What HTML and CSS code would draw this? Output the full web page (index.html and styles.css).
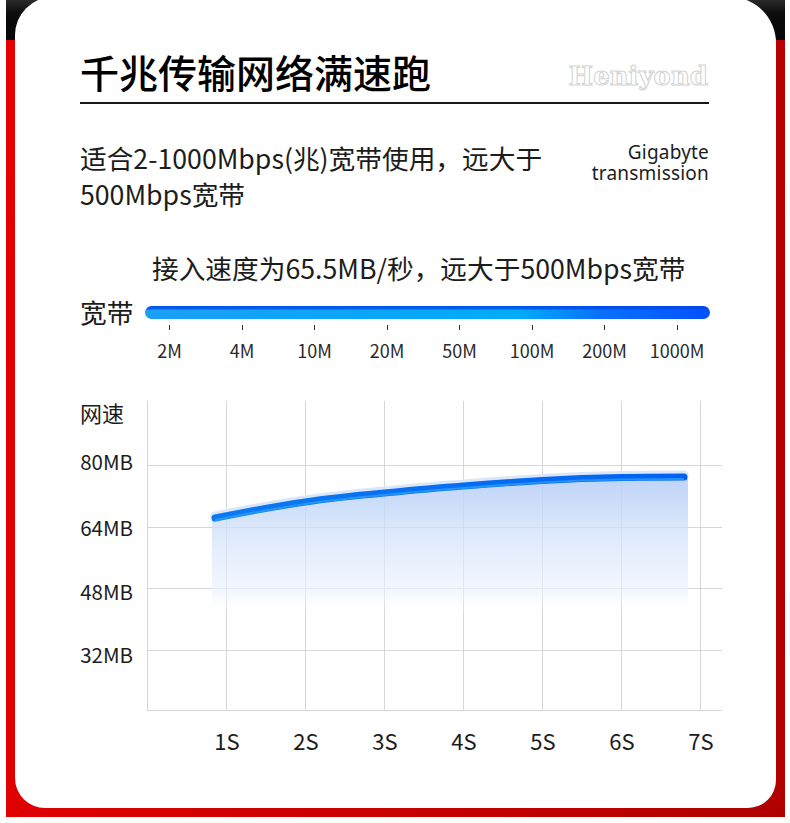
FILE: index.html
```html
<!DOCTYPE html>
<html lang="zh-CN">
<head>
<meta charset="utf-8">
<title>千兆传输网络满速跑</title>
<link rel="stylesheet" href="styles.css">
</head>
<body>
<div class="frame">
  <main class="card">
    <header class="head">
      <h1 class="title">千兆传输网络满速跑</h1>
      <span class="brand">Heniyond</span>
    </header>

    <section class="intro">
      <p class="desc">适合2-1000Mbps(兆)宽带使用，远大于<br>500Mbps宽带</p>
      <div class="giga">
        <p class="giga-line">Gigabyte</p>
        <p class="giga-line">transmission</p>
      </div>
    </section>

    <p class="note">接入速度为65.5MB/秒，远大于500Mbps宽带</p>

    <div class="bw">
      <span class="bw-label">宽带</span>
      <div class="bw-scale">
        <div class="bw-bar"></div>
        <ul class="bw-ticks">
          <li>2M</li>
          <li>4M</li>
          <li>10M</li>
          <li>20M</li>
          <li>50M</li>
          <li>100M</li>
          <li>200M</li>
          <li>1000M</li>
        </ul>
      </div>
    </div>

    <section class="chart">
      <div class="y-axis">
        <span class="y-title">网速</span>
        <span class="y-val v80">80MB</span>
        <span class="y-val v64">64MB</span>
        <span class="y-val v48">48MB</span>
        <span class="y-val v32">32MB</span>
      </div>
      <svg class="plot" width="575" height="310" viewBox="0 0 575 310">
        <defs>
          <linearGradient id="area" x1="0" y1="74" x2="0" y2="214" gradientUnits="userSpaceOnUse">
            <stop offset="0" stop-color="#b5cdf6" stop-opacity="0.9"/>
            <stop offset="0.45" stop-color="#d4e3fa" stop-opacity="0.75"/>
            <stop offset="0.85" stop-color="#edf3fd" stop-opacity="0.6"/>
            <stop offset="1" stop-color="#ffffff" stop-opacity="0"/>
          </linearGradient>
          <linearGradient id="line" x1="65" y1="0" x2="540" y2="0" gradientUnits="userSpaceOnUse">
            <stop offset="0" stop-color="#0b7af0"/>
            <stop offset="1" stop-color="#0062f3"/>
          </linearGradient>
        </defs>
        <g fill="none" stroke="#d4d6dc" stroke-width="1">
          <path d="M0.5 0V310M79.5 0V310M158.5 0V310M237.5 0V310M316.5 0V310M395.5 0V310M474.5 0V310M553.5 0V310"/>
          <path d="M0 64.5H575M0 126.5H575M0 187.5H575M0 249.5H575M0 309.5H575"/>
        </g>
        <path fill="url(#area)" d="M65 118 L68 117 C98 111 128 105.5 158 101 C184 97 210 94.5 237 92 C263 89.5 290 87 316 85 C342 83 368 81 395 79.5 C421 78 447 77 474 76.5 C495 76 516 76 537 76 L541 76 L541 214 L65 214 Z"/>
        <path fill="none" stroke="#dbe6f8" stroke-width="9" stroke-linecap="round" transform="translate(0 -2)" d="M68 117 C98 111 128 105.5 158 101 C184 97 210 94.5 237 92 C263 89.5 290 87 316 85 C342 83 368 81 395 79.5 C421 78 447 77 474 76.5 C495 76 516 76 537 76"/>
        <path fill="none" stroke="url(#line)" stroke-width="7" stroke-linecap="round" d="M68 117 C98 111 128 105.5 158 101 C184 97 210 94.5 237 92 C263 89.5 290 87 316 85 C342 83 368 81 395 79.5 C421 78 447 77 474 76.5 C495 76 516 76 537 76"/>
        <path fill="none" stroke="#2c9cfb" stroke-width="2.2" stroke-linecap="round" opacity="0.8" transform="translate(0 2)" d="M69 117 C98 111 128 105.5 158 101 C184 97 210 94.5 237 92 C263 89.5 290 87 316 85 C342 83 368 81 395 79.5 C421 78 447 77 474 76.5 C495 76 516 76 536 76"/>
      </svg>
      <ol class="x-axis">
        <li>1S</li>
        <li>2S</li>
        <li>3S</li>
        <li>4S</li>
        <li>5S</li>
        <li>6S</li>
        <li>7S</li>
      </ol>
    </section>
  </main>
</div>
</body>
</html>
```

FILE: styles.css
```css
* {
  box-sizing: border-box;
}

html,
body {
  margin: 0;
  padding: 0;
  background: #ffffff;
}

body {
  width: 790px;
  font-family: "Noto Sans CJK SC", "Noto Sans", sans-serif;
  color: #1c1c1c;
}

.frame {
  display: flex;
  flex-direction: column;
  width: 779px;
  height: 817px;
  margin-left: 6px;
  padding: 0 9px 9.5px;
  background:
    linear-gradient(180deg, #2a2a2a 0, #0b0b0b 14px, #070707 40px, transparent 40px),
    linear-gradient(100deg, #e80000 0%, #cc0000 50%, #b00000 100%);
}

.card {
  height: 810.5px;
  margin-top: -3px;
  padding: 52.3px 67px 0 65px;
  background: #ffffff;
  border-radius: 38px 46px 28px 30px;
}

/* header */
.head {
  display: flex;
  justify-content: space-between;
  align-items: flex-end;
  padding-bottom: 8.7px;
  border-bottom: 2px solid #161616;
}

.title {
  margin: 0;
  font-size: 39px;
  line-height: 44px;
  font-weight: 500;
  color: #000000;
}

.brand {
  margin: 0 1px 2.5px 0;
  font-family: "DejaVu Serif", serif;
  font-weight: 700;
  font-size: 26px;
  line-height: 30px;
  color: #ffffff;
  -webkit-text-stroke: 1px #d2d2d2;
}

/* intro */
.intro {
  display: flex;
  justify-content: space-between;
  align-items: flex-start;
  margin-top: 36.5px;
}

.desc {
  margin: 0;
  font-size: 26.7px;
  line-height: 36px;
  white-space: nowrap;
  color: #1c1c1c;
}

.giga {
  display: flex;
  flex-direction: column;
  align-items: flex-end;
  margin-top: 2px;
  font-family: "Noto Sans", sans-serif;
  font-size: 19px;
  letter-spacing: 0.2px;
  color: #1c1c1c;
}

.giga-line {
  margin: 0;
  height: 21px;
  line-height: 21px;
  white-space: nowrap;
}

.note {
  margin: 38px 0 0;
  padding-left: 72px;
  font-size: 26.7px;
  line-height: 36px;
  white-space: nowrap;
  color: #1c1c1c;
}

/* bandwidth scale */
.bw {
  display: flex;
  align-items: flex-start;
  margin-top: 11px;
}

.bw-label {
  flex: 0 0 53px;
  font-size: 26.7px;
  line-height: 30px;
  white-space: nowrap;
  color: #1c1c1c;
}

.bw-scale {
  flex: 0 0 580px;
}

.bw-bar {
  height: 13px;
  margin: 9px 3px 0 12px;
  border-radius: 7px;
  background:
    linear-gradient(180deg, rgba(0, 72, 232, 0.9) 0, rgba(0, 72, 232, 0.75) 2.5px, rgba(0, 72, 232, 0) 4.5px),
    linear-gradient(90deg, #1aa0f6 0%, #0aa6f8 40%, #00acf8 66%, #0a70fb 81%, #0452ff 100%);
}

.bw-ticks {
  display: grid;
  grid-template-columns: repeat(8, 72.5px);
  margin: 6px 0 0;
  padding: 0;
  list-style: none;
}

.bw-ticks li {
  display: flex;
  flex-direction: column;
  align-items: center;
  font-size: 18px;
  line-height: 20px;
  white-space: nowrap;
  color: #2a2a2a;
}

.bw-ticks li::before {
  content: "";
  width: 1px;
  height: 5px;
  margin-bottom: 9.7px;
  background: #333333;
}

/* chart */
.chart {
  display: grid;
  grid-template-columns: 67px 600px;
  margin-top: 39.3px;
}

.y-axis {
  display: flex;
  flex-direction: column;
  align-items: flex-end;
  padding-right: 14px;
}

.y-title {
  align-self: flex-start;
  font-size: 22px;
  line-height: 26px;
  color: #1c1c1c;
}

.y-val {
  font-size: 20.5px;
  line-height: 24px;
  color: #1c1c1c;
}

.v80 {
  margin-top: 24px;
}

.v64 {
  margin-top: 42px;
}

.v48 {
  margin-top: 40px;
}

.v32 {
  margin-top: 39px;
}

.plot {
  display: block;
  margin-top: 1.5px;
  overflow: visible;
}

.x-axis {
  grid-column: 2;
  display: grid;
  grid-template-columns: repeat(7, 79px);
  margin: 16.2px 0 0 40.5px;
  padding: 0;
  list-style: none;
}

.x-axis li {
  text-align: center;
  font-size: 22px;
  line-height: 26px;
  color: #1c1c1c;
}
```
